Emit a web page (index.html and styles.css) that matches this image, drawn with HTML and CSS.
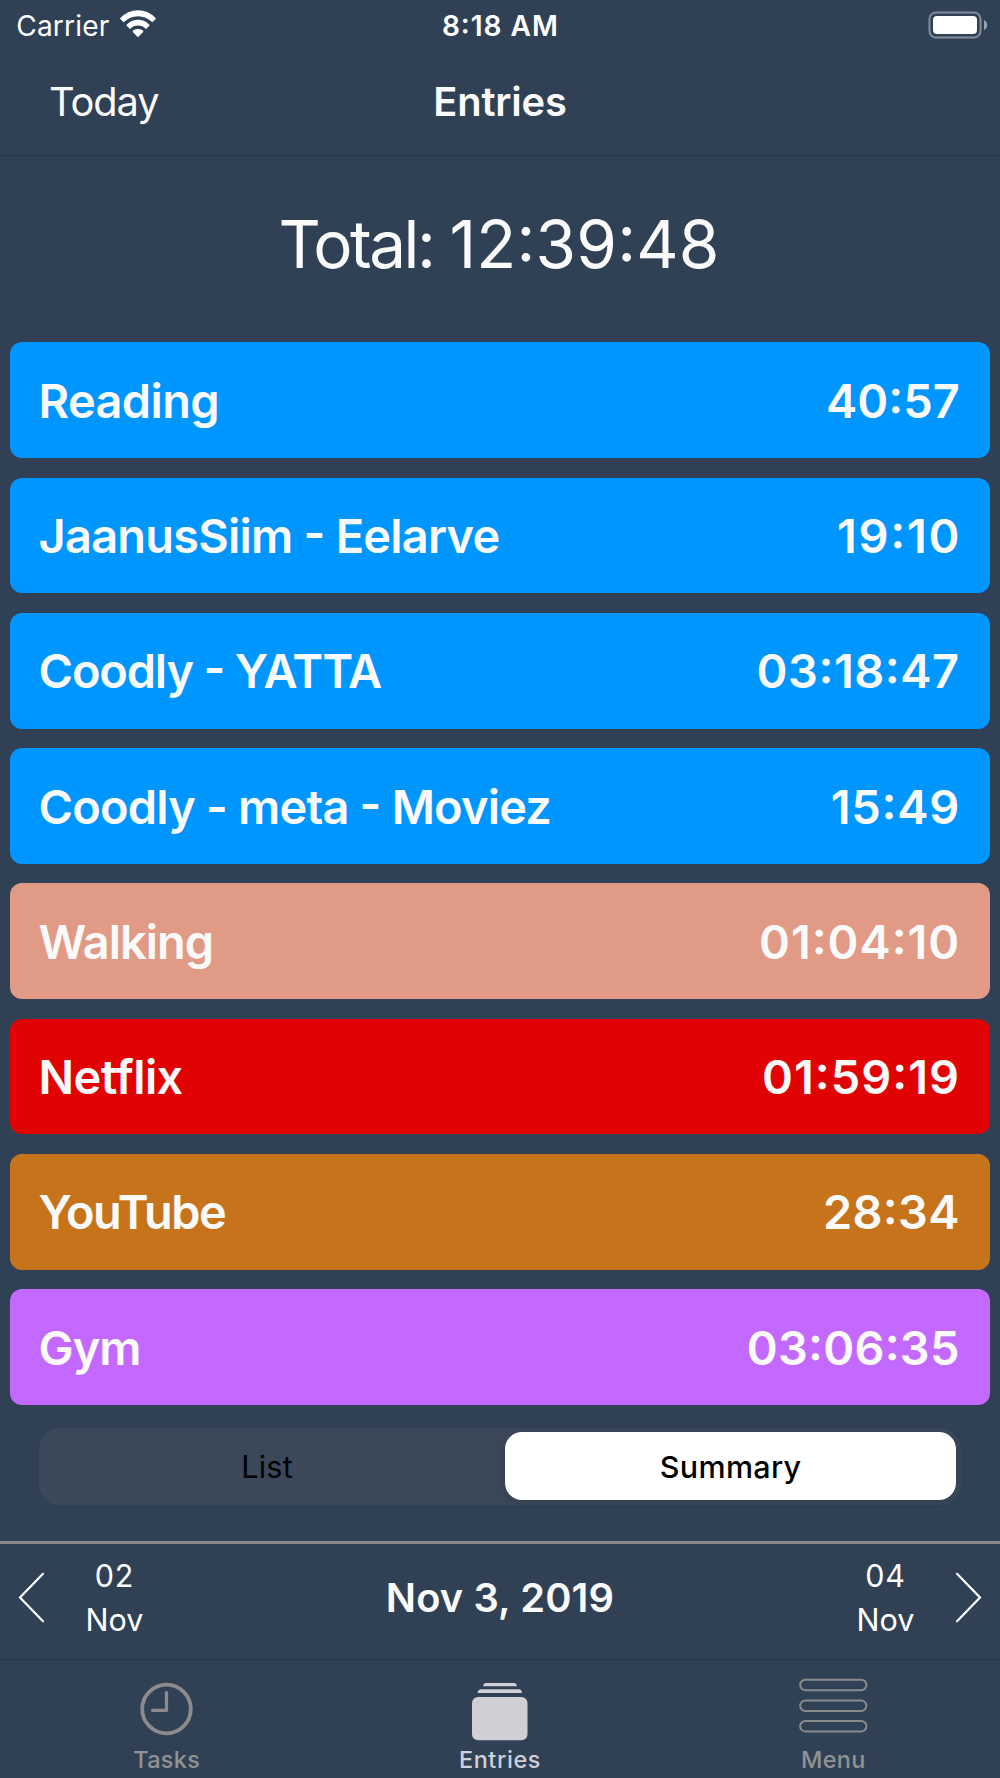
FILE: index.html
```html
<!DOCTYPE html>
<html lang="en">
<head>
<meta charset="utf-8">
<title>Entries</title>
<link rel="stylesheet" href="styles.css">
</head>
<body>
<div class="app">
  <header class="status">
    <div class="status-side">
      <span class="carrier">Carrier</span>
      <svg class="wifi" width="38" height="28" viewBox="0 0 38 28" fill="#fff">
        <path d="M19 27.2 L13.6 21.7 Q14.2 19 19 19 Q23.8 19 24.4 21.7 Z"/>
        <path d="M7.2 15.2 Q12.2 9.8 19 9.8 Q25.800 9.800 30.800 15.200 L27 19 Q23.600 15.600 19 15.600 Q14.400 15.600 11 19 Z"/>
        <path d="M0.900 8.400 Q8.700 0.200 19 0.200 Q29.300 0.200 37.100 8.400 L33.400 12.200 Q27.100 6.200 19 6.200 Q10.900 6.200 4.600 12.200 Z"/>
      </svg>
    </div>
    <span class="clock">8:18 AM</span>
    <div class="status-side status-end">
      <svg width="60" height="28" viewBox="0 0 60 28">
        <rect x="1.500" y="1.500" width="51" height="25" rx="6.500" fill="none" stroke="#838d9a" stroke-width="2"/>
        <rect x="5" y="5" width="44" height="18" rx="4" fill="#fff"/>
        <path d="M56 9 Q59.200 10.500 59.200 14 Q59.200 17.500 56 19 Z" fill="#98a0ab"/>
      </svg>
    </div>
  </header>

  <nav class="navbar">
    <a class="nav-action">Today</a>
    <h1 class="nav-title">Entries</h1>
    <span></span>
  </nav>

  <main class="content">
    <div class="total"><span class="total-label">Total:</span> <span class="total-time">12:39:48</span></div>
    <ul class="entries">
      <li class="entry work"><span class="name">Reading</span><span class="time">40:57</span></li>
      <li class="entry work"><span class="name">JaanusSiim - Eelarve</span><span class="time">19:10</span></li>
      <li class="entry work"><span class="name">Coodly - YATTA</span><span class="time">03:18:47</span></li>
      <li class="entry work"><span class="name">Coodly - meta - Moviez</span><span class="time">15:49</span></li>
      <li class="entry walking"><span class="name">Walking</span><span class="time">01:04:10</span></li>
      <li class="entry netflix"><span class="name">Netflix</span><span class="time">01:59:19</span></li>
      <li class="entry youtube"><span class="name">YouTube</span><span class="time">28:34</span></li>
      <li class="entry gym"><span class="name">Gym</span><span class="time">03:06:35</span></li>
    </ul>
    <div class="segmented">
      <span class="segment">List</span>
      <span class="segment selected">Summary</span>
    </div>
  </main>

  <section class="datebar">
    <svg class="chevron" width="28" height="52" viewBox="0 0 28 52"><path d="M25 1.800 L2 25.500 L25 49.200"/></svg>
    <div class="day"><span class="num">02</span><span>Nov</span></div>
    <strong class="current">Nov 3, 2019</strong>
    <div class="day"><span class="num">04</span><span>Nov</span></div>
    <svg class="chevron" width="28" height="52" viewBox="0 0 28 52"><path d="M3 1.800 L26 25.500 L3 49.200"/></svg>
  </section>

  <footer class="tabbar">
    <a class="tab">
      <svg width="80" height="66" viewBox="0 0 80 66" fill="none" stroke="#8b8b8d" stroke-width="3.800" stroke-linecap="round" stroke-linejoin="round">
        <circle cx="39.500" cy="34" r="24.300"/>
        <path d="M39.500 17.500 V35.300 H25.500" stroke-width="3.200"/>
      </svg>
      <span>Tasks</span>
    </a>
    <a class="tab active">
      <svg width="80" height="66" viewBox="0 0 80 66" fill="#d0cfd5">
        <path d="M23 11.200 Q23.500 8 26 8 H54 Q56.500 8 57 11.200 Z"/>
        <path d="M17.500 18 Q18.200 14.300 21 14.300 H59 Q61.500 14.300 62 18 Z"/>
        <rect x="12" y="22" width="55.500" height="43.300" rx="6"/>
      </svg>
      <span>Entries</span>
    </a>
    <a class="tab menu">
      <svg width="80" height="66" viewBox="0 0 80 66" fill="none" stroke="#8b8b8d" stroke-width="2">
        <rect x="7.200" y="4.800" width="66.200" height="10.400" rx="5.200"/>
        <rect x="7.200" y="25.600" width="66.200" height="10.400" rx="5.200"/>
        <rect x="7.200" y="46" width="66.200" height="10.400" rx="5.200"/>
      </svg>
      <span>Menu</span>
    </a>
  </footer>
</div>
</body>
</html>
```

FILE: styles.css
```css
* { box-sizing: border-box; }

body {
  margin: 0;
  background: #304156;
  color: #fafafa;
  font-family: Inter, "Liberation Sans", sans-serif;
  font-feature-settings: "calt" 1;
}

.app {
  display: flex;
  flex-direction: column;
  width: 1000px;
  height: 1778px;
  overflow: hidden;
}

/* Status bar */
.status {
  display: grid;
  grid-template-columns: 1fr auto 1fr;
  align-items: center;
  height: 48px;
  padding: 3px 12px 0 16.3px;
  color: #fff;
  font-size: 28.1px;
}
.status-side { display: flex; align-items: center; height: 45px; }
.status-end { justify-content: flex-end; padding-bottom: 2px; }
.carrier { letter-spacing: 0.005em; }
.wifi { margin: 0 0 3px 9.5px; }
.clock { font-weight: 600; letter-spacing: 0.034em; margin-right: 3.5px; }

/* Navigation bar */
.navbar {
  display: grid;
  grid-template-columns: 1fr auto 1fr;
  align-items: center;
  height: 107.5px;
  padding: 0 49px;
  border-bottom: 1.5px solid #28384a;
  font-size: 39.8px;
}
.nav-action { letter-spacing: -0.027em; }
.nav-title { margin: 0; font-size: inherit; font-weight: 600; letter-spacing: -0.004em; }

/* Summary list */
.content {
  display: flex;
  flex-direction: column;
  flex: 1;
}
.total {
  display: flex;
  align-items: center;
  justify-content: center;
  gap: 16px;
  height: 186.800px;
  padding: 0 2px 9px 0;
  font-size: 65.6px;
}
.total-label { letter-spacing: -0.038em; }
.total-time { letter-spacing: 0.003em; }
.entries {
  display: flex;
  flex-direction: column;
  gap: 19.32px;
  margin: 0;
  padding: 0 9.66px;
  list-style: none;
}
.entry {
  display: flex;
  align-items: center;
  justify-content: space-between;
  height: 115.95px;
  padding: 1px 30.7px 0 28.9px;
  border-radius: 12px;
  font-size: 46.9px;
  font-weight: 600;
}
.work { background: #0096ff; }
.walking { background: #e19a86; }
.netflix { background: #e10303; }
.youtube { background: #c7731b; }
.gym { background: #c469ff; }

.entry:nth-child(1) .name { letter-spacing: -0.0129em; }
.entry:nth-child(2) .name { letter-spacing: -0.016em; }
.entry:nth-child(3) .name { letter-spacing: -0.0245em; }
.entry:nth-child(4) .name { letter-spacing: -0.0168em; }
.entry:nth-child(5) .name { letter-spacing: -0.0213em; }
.entry:nth-child(6) .name { letter-spacing: -0.0113em; }
.entry:nth-child(7) .name { letter-spacing: -0.0312em; }
.entry:nth-child(8) .name { letter-spacing: -0.021em; }
.entry:nth-child(2) .time { letter-spacing: 0.037em; margin-right: -1.5px; }
.entry:nth-child(3) .time { letter-spacing: 0.0115em; }
.entry:nth-child(4) .time { letter-spacing: 0.017em; margin-right: -0.5px; }
.entry:nth-child(5) .time { letter-spacing: 0.02em; margin-right: -0.5px; }
.entry:nth-child(6) .time { letter-spacing: 0.022em; margin-right: -0.5px; }
.entry:nth-child(7) .time { letter-spacing: 0.006em; }
.entry:nth-child(8) .time { letter-spacing: 0.005em; }

/* List / Summary switch */
.segmented {
  display: grid;
  grid-template-columns: 447px 451px;
  justify-content: space-between;
  height: 77.3px;
  margin: 22.7px 39.3px 0 39px;
  padding: 4.6px;
  border-radius: 21px;
  background: #3a485a;
  color: #000;
  font-size: 30.5px;
}
.segment {
  display: flex;
  align-items: center;
  justify-content: center;
  border-radius: 17px;
  letter-spacing: 0.01em;
}
.selected {
  background: #fff;
  font-weight: 500;
  box-shadow: 0 3px 12px rgba(0, 0, 0, 0.12);
}

/* Date switcher */
.datebar {
  display: grid;
  grid-template-columns: 28px 137px 1fr 137px 28px;
  align-items: center;
  justify-items: center;
  height: 118px;
  padding: 0 18px 7px;
  border-top: 3px solid #8d8a8f;
}
.chevron { fill: none; stroke: #fff; stroke-width: 2.2; stroke-linecap: round; }
.day {
  display: flex;
  flex-direction: column;
  align-items: center;
  color: #fff;
  font-size: 30.5px;
  line-height: 43.4px;
}
.num { letter-spacing: 0.025em; }
.current { font-size: 39.8px; font-weight: 600; letter-spacing: 0.0035em; }

/* Tab bar */
.tabbar {
  display: grid;
  grid-template-columns: repeat(3, 1fr);
  height: 119.5px;
  border-top: 1.5px solid #27364a;
}
.tab {
  display: flex;
  flex-direction: column;
  align-items: center;
  padding-top: 15px;
  color: #929292;
  font-size: 23.4px;
  font-weight: 500;
  line-height: 38px;
  letter-spacing: 0.015em;
}
.active { color: #d0cfd5; letter-spacing: 0.027em; }
```
